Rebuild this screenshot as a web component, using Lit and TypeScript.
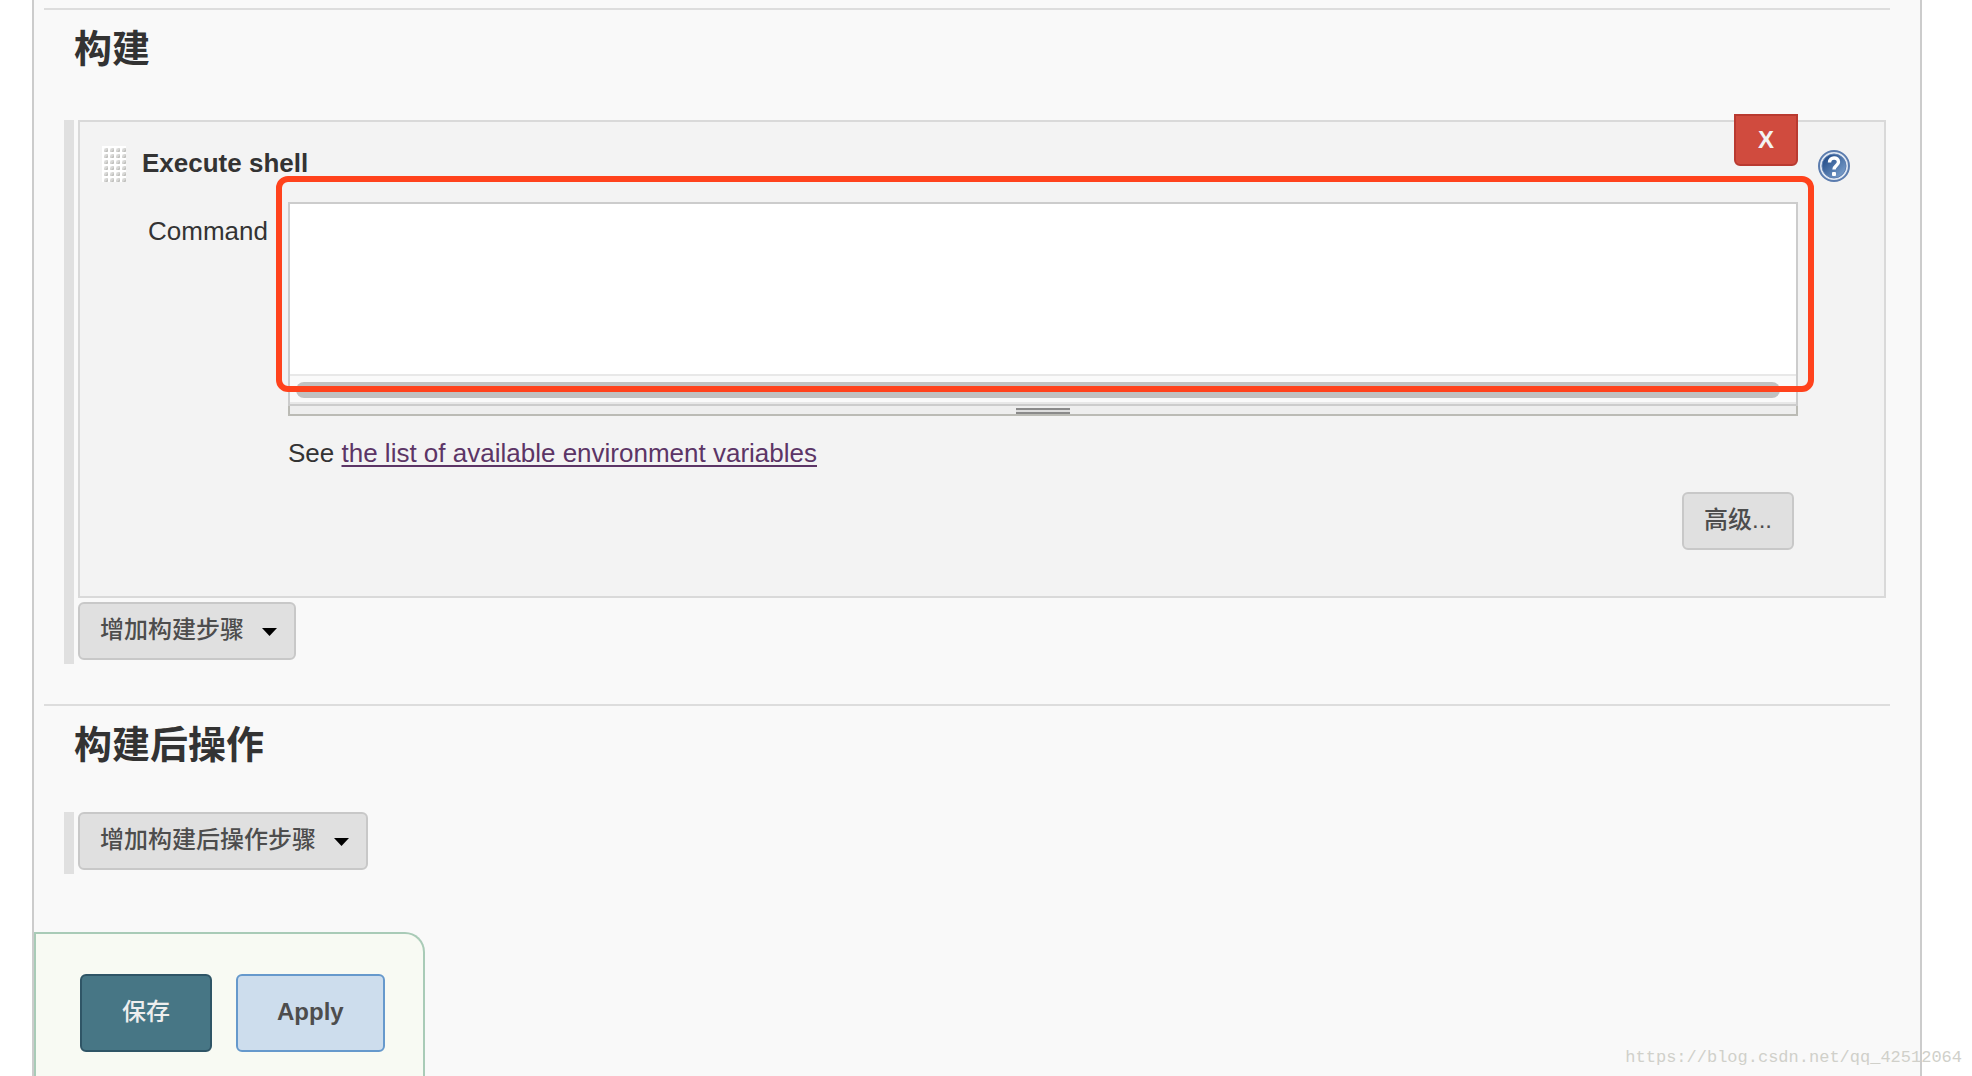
import { LitElement, html, css, svg } from "lit";
import { customElement, property } from "lit/decorators.js";

@customElement("menu-button")
class MenuButton extends LitElement {
  @property() label = "";

  static styles = css`
    :host { display: block; }
    .btn {
      display: flex; align-items: center; gap: 17px;
      box-sizing: border-box; height: 58px; margin: 0; padding: 0 17px 2px 20px;
      border: 2px solid #c8c8c8; border-radius: 6px; background: #e0e0e0;
      color: #4d4d4d; font: 500 24px/32px "Liberation Sans", "Noto Sans CJK SC", sans-serif;
      cursor: pointer;
    }
    .caret { display: block; width: 16px; height: 8px; margin-top: 4px; fill: #000; }
  `;

  render() {
    return html`<button class="btn" type="button" aria-haspopup="menu">
      <span>${this.label}</span>
      <svg class="caret" viewBox="0 0 16 8" aria-hidden="true"><path d="M1 0h15L8.500 8z" /></svg>
    </button>`;
  }
}

@customElement("drag-handle")
class DragHandle extends LitElement {
  static styles = css`
    :host { display: block; width: 24px; height: 36px; cursor: move; }
    .dots { display: block; width: 24px; height: 36px; }
    .light { fill: #fff; }
    .mid { fill: #d8d8d6; }
    .dark { fill: #c0c0bd; }
  `;

  render() {
    const cells = [];
    for (let y = 0; y < 36; y += 6) {
      for (let x = 0; x < 24; x += 6) {
        cells.push(svg`
          <path class="light" d="M${x} ${y}h6v2h-4v4h-2z" />
          <path class="mid" d="M${x + 2} ${y + 6}v-2l2-2h2v4z" />
          <path class="dark" d="M${x + 3} ${y + 6}l3-3v2l-1 1z" />`);
      }
    }
    return html`<svg class="dots" viewBox="0 0 24 36" aria-hidden="true">${cells}</svg>`;
  }
}

@customElement("app-root")
class AppRoot extends LitElement {
  static styles = css`
    :host {
      display: block; position: relative; min-height: 100vh; overflow: hidden;
      background: #fff; color: #333;
      font: 26px/32px "Liberation Sans", "Noto Sans CJK SC", sans-serif;
    }
    .panel {
      display: flex; flex-direction: column;
      box-sizing: border-box; min-height: 100vh; margin: 0 50px 0 32px; padding-top: 8px;
      border: solid #ccc; border-width: 0 2px; background: #f9f9f9;
    }
    .section { margin: 0 30px 0 10px; border-top: 2px solid #ddd; }
    .title {
      box-sizing: border-box; margin: 0; padding: 11px 0 0 30px; height: 106px;
      font-size: 38px; line-height: 56px; font-weight: 700;
    }
    .group { display: flex; gap: 4px; margin: 0 4px 0 20px; }
    .rail { flex: none; width: 10px; background: #e0e0e0; }
    .steps { flex: 1; min-width: 0; display: flex; flex-direction: column; align-items: flex-start; gap: 4px; padding-bottom: 4px; }
    .builders { margin-top: 4px; margin-bottom: 40px; }
    .step {
      position: relative; box-sizing: border-box; align-self: stretch;
      border: 2px solid #d9d9d9; background: #f3f3f3; padding: 24px 34px 46px 22px;
    }
    .head { display: flex; align-items: flex-start; height: 56px; }
    .name { flex: 1; margin: 0 0 0 16px; font-size: 26px; line-height: 34px; font-weight: 700; }
    .help { padding: 0; border: 0; background: none; margin-top: 4px; height: 32px; cursor: pointer; }
    .help-icon { display: block; width: 32px; height: 32px; }
    .remove {
      position: absolute; top: -8px; right: 86px; box-sizing: border-box;
      width: 64px; height: 52px; padding: 0; border: 2px solid #b93a30; border-radius: 0 0 6px 6px;
      background: #d04b3e; color: #f3f3f3; font: 700 24px/32px "Liberation Sans", sans-serif; cursor: pointer;
    }
    .row { display: flex; justify-content: flex-end; margin-right: 52px; }
    .label { flex: 1; padding: 13px 0 0 46px; }
    .field { flex: none; width: calc(100% - 186px); position: relative; }
    .editor { border: 2px solid #ccc; background: #fff; }
    .command {
      display: block; box-sizing: border-box; width: 100%; height: 170px; padding: 8px;
      border: 0; outline: 0; resize: none; background: #fff; color: #333;
      font: 24px/32px "Liberation Mono", monospace;
    }
    .scroll { border: solid #e8e8e8; border-width: 2px 0; background: #fafafa; padding: 6px 16px 4px 6px; }
    .thumb { height: 16px; border-radius: 8px; background: #c1c1c1; }
    .resizer {
      display: flex; justify-content: center; box-sizing: border-box; height: 10px; padding-top: 2px;
      border: 2px solid #bbbbb5; border-top: 0; background: #eee; cursor: ns-resize;
    }
    .grip {
      box-sizing: border-box; width: 54px; height: 6px;
      border: solid #8a8a8a; border-width: 2px 0; background: #ddd;
    }
    .mark {
      position: absolute; left: -12px; right: -16px; top: -26px; height: 204px;
      border: 6px solid #ff421c; border-radius: 12px; pointer-events: none;
    }
    .hint { padding-top: 21px; }
    .link { color: #5c3566; text-decoration: underline; text-underline-offset: 3px; text-decoration-thickness: 2px; }
    .actions { display: flex; justify-content: flex-end; padding: 23px 56px 0 0; }
    .advanced {
      box-sizing: border-box; height: 58px; padding: 0 20px 2px;
      border: 2px solid #c8c8c8; border-radius: 6px; background: #e0e0e0; color: #4d4d4d;
      font: 500 24px/32px "Liberation Sans", "Noto Sans CJK SC", sans-serif; cursor: pointer;
    }
    .footer {
      display: flex; align-items: flex-start; align-self: flex-start; gap: 24px; flex: 1;
      box-sizing: border-box; margin-top: 58px; padding: 40px 38px 24px 44px;
      border: 2px solid #a9cbb7; border-bottom: 0; border-radius: 0 20px 0 0; background: #f8faf3;
    }
    .submit {
      box-sizing: border-box; height: 78px; padding: 0 40px 2px; border: 2px solid; border-radius: 6px;
      font: 700 24px/32px "Liberation Sans", "Noto Sans CJK SC", sans-serif; cursor: pointer;
    }
    .save { background: #477685; border-color: #2f5566; color: #eee; font-weight: 500; }
    .apply { padding: 0 39px 2px; background: #cddded; border-color: #6699cc; color: #4d4d4d; }
    .watermark {
      position: absolute; right: 10px; bottom: 6px; color: #d0d0ca;
      font: 17px/24px "Liberation Mono", monospace;
    }
  `;

  render() {
    return html`
      <main class="panel">
        <section class="section">
          <h2 class="title">构建</h2>
          <div class="group builders">
            <div class="rail"></div>
            <div class="steps">
              <div class="step">
                <button class="remove" type="button">X</button>
                <div class="head">
                  <drag-handle></drag-handle>
                  <h3 class="name">Execute shell</h3>
                  <button class="help" type="button" aria-label="Help">${this.helpIcon()}</button>
                </div>
                <div class="row">
                  <label class="label" for="command">Command</label>
                  <div class="field">
                    <div class="editor">
                      <textarea class="command" id="command" spellcheck="false"></textarea>
                      <div class="scroll"><div class="thumb"></div></div>
                    </div>
                    <div class="resizer"><div class="grip"></div></div>
                    <div class="hint">See <a class="link" href="#env">the list of available environment variables</a></div>
                    <div class="mark"></div>
                  </div>
                </div>
                <div class="actions"><button class="advanced" type="button">高级...</button></div>
              </div>
              <menu-button label="增加构建步骤"></menu-button>
            </div>
          </div>
        </section>
        <section class="section">
          <h2 class="title">构建后操作</h2>
          <div class="group">
            <div class="rail"></div>
            <div class="steps"><menu-button label="增加构建后操作步骤"></menu-button></div>
          </div>
        </section>
        <footer class="footer">
          <button class="submit save" type="button">保存</button>
          <button class="submit apply" type="button">Apply</button>
        </footer>
      </main>
      <div class="watermark">https://blog.csdn.net/qq_42512064</div>
    `;
  }

  private helpIcon() {
    return html`<svg class="help-icon" viewBox="0 0 32 32" aria-hidden="true">
      <defs>
        <linearGradient id="disc" x1="0" y1="0" x2="1" y2="1">
          <stop offset="0.1" stop-color="#204a87" /><stop offset="1" stop-color="#86aad4" />
        </linearGradient>
      </defs>
      <circle cx="16" cy="16" r="15" fill="#dfe7f2" stroke="#5b7cae" stroke-width="2" />
      <circle cx="16" cy="16" r="12" fill="url(#disc)" stroke="#5f80b2" stroke-width="1" />
      <path d="M11.500 12.500C11.500 6.500 20.500 6.500 20.500 12C20.500 15.500 16 15.500 16 19.500" fill="none" stroke="#fff" stroke-width="3.400" />
      <rect x="14" y="22" width="4" height="4" rx="1" fill="#fff" />
    </svg>`;
  }
}
